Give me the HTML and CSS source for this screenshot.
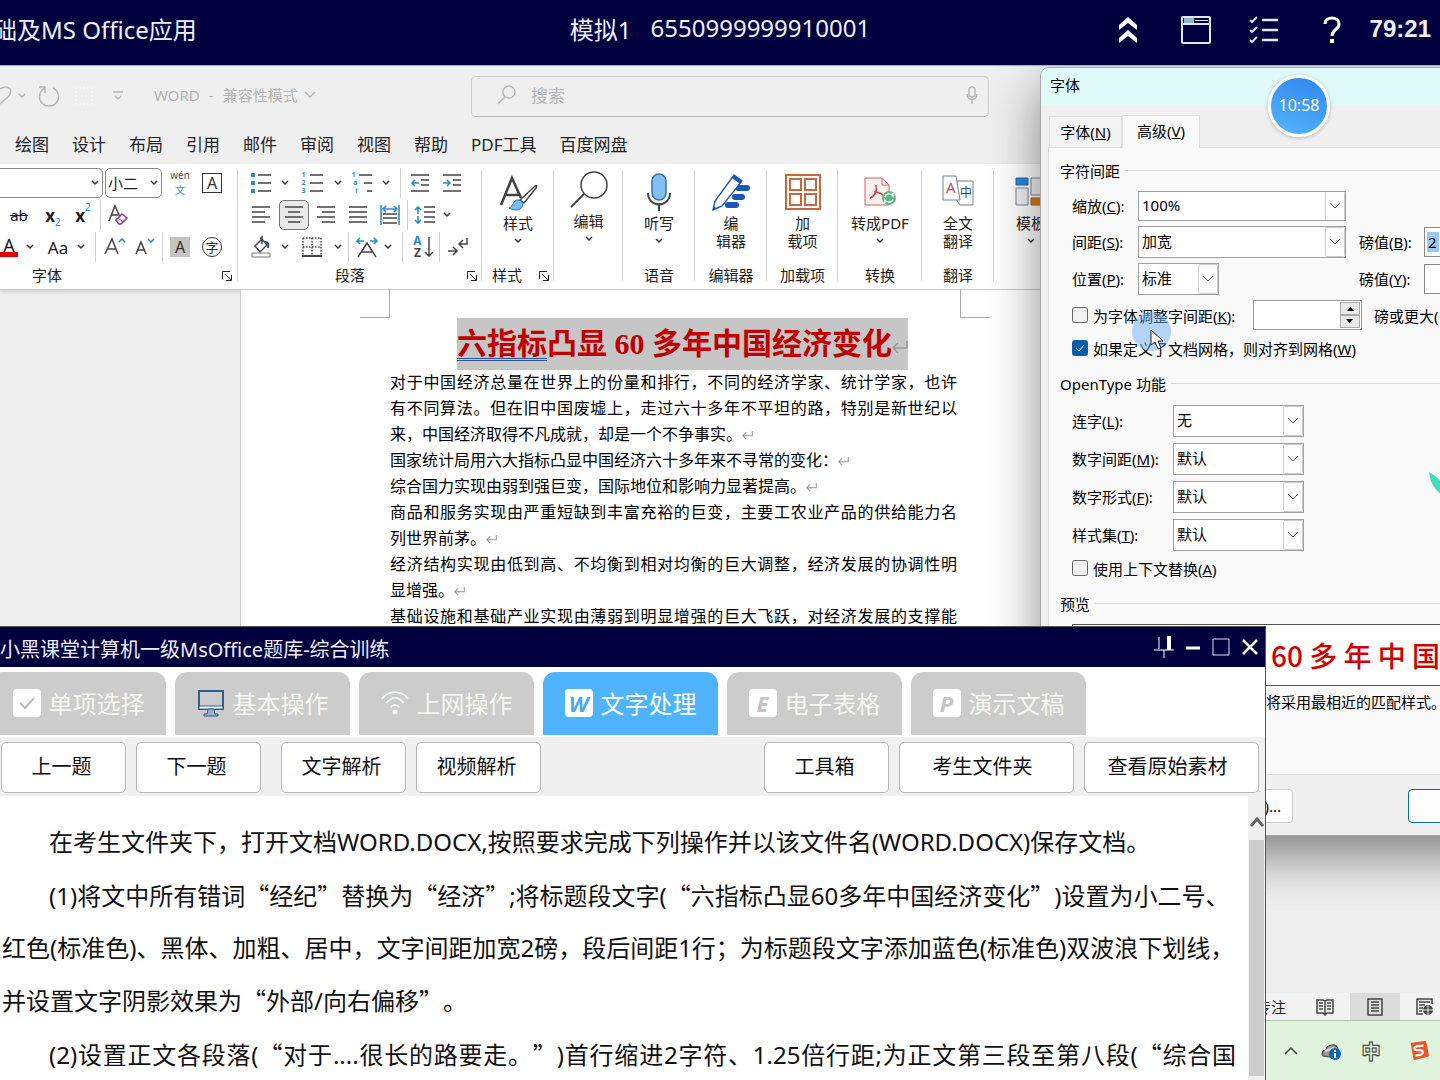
FILE: index.html
```html
<!DOCTYPE html>
<html lang="zh-CN">
<head>
<meta charset="utf-8">
<title>WORD</title>
<link rel="stylesheet" href="styles.css">
</head>
<body>
<div class="desktop">
  <header class="exam-bar">
    <div class="exam-title"><span>础及MS Office应用</span></div>
    <div class="exam-id"><span>模拟1</span><span>6550999999910001</span></div>
    <div class="exam-tools">
      <button aria-label="收起"><svg width="20" height="28" viewBox="0 0 20 28" fill="#fff"><path d="M10 1 19 9v5l-9-7-9 7V9zM10 14l9 8v5l-9-7-9 7v-5z"/></svg></button>
      <button aria-label="窗口"><svg width="30" height="28" viewBox="0 0 30 28" fill="none" stroke="#e4e8ff" stroke-width="2"><rect x="1" y="1" width="28" height="26" rx="1"/><path d="M1 8h28"/><path d="M3 4.500h10" stroke="#8fb8cc" stroke-width="5"/><path d="M14 4.500h13" stroke-width="1"/></svg></button>
      <button aria-label="列表"><svg width="30" height="28" viewBox="0 0 30 28" fill="none" stroke="#e8e8ff"><path d="M13 4h16M13 14h16M13 24h16" stroke-width="2.500"/><path d="m1 4 2 2 5-5M1 14l2 2 5-5M1 24l2 2 5-5" stroke-width="1.800"/></svg></button>
      <button aria-label="帮助"><svg width="18" height="28" viewBox="0 0 18 28" fill="none" stroke="#fff" stroke-width="3"><path d="M2 8c0-8 14-8 14 0 0 6-7 5-7 12"/><path d="M9 23v4" stroke-width="4"/></svg></button>
      <time>79:21</time>
    </div>
  </header>

  <main class="word">
    <div class="word-title">
      <div class="quick">
        <button class="q-undo" aria-label="撤消"><svg width="14" height="22" viewBox="0 0 14 22"><path d="M0 4c6-4 13-1 10 5-1 3-6 6-10 10"/></svg></button>
        <button class="q-chev" aria-label="撤消选项"><svg width="8" height="6" viewBox="0 0 8 6"><path d="m1 1 3 3 3-3"/></svg></button>
        <button class="q-redo" aria-label="重复"><svg width="22" height="22" viewBox="0 0 22 22"><path d="M1 2h6v6M7 3A9.500 9.500 0 1 0 15 3"/></svg></button>
        <span class="q-dots"></span>
        <button class="q-more" aria-label="自定义"><svg width="10" height="10" viewBox="0 0 10 10"><path d="M0 1h10M2 5l3 3 3-3"/></svg></button>
      </div>
      <div class="doc-name"><span>WORD</span><span>-</span><span>兼容性模式</span><svg width="12" height="8" viewBox="0 0 12 8"><path d="m1 1 5 5 5-5"/></svg></div>
      <label class="search">
        <svg width="20" height="20" viewBox="0 0 20 20"><circle cx="12" cy="7" r="6"/><path d="m8 12-7 7"/></svg>
        <input type="text" placeholder="搜索" aria-label="搜索">
        <svg width="12" height="18" viewBox="0 0 12 18"><rect x="3" y="1" width="6" height="10" rx="3"/><path d="M1 8c0 7 10 7 10 0M6 14v4"/></svg>
      </label>
    </div>
    <nav class="menu">
      <a href="#">绘图</a><a href="#">设计</a><a href="#">布局</a><a href="#">引用</a><a href="#">邮件</a><a href="#">审阅</a><a href="#">视图</a><a href="#">帮助</a><a href="#">PDF工具</a><a href="#">百度网盘</a>
    </nav>

    <div class="ribbon">
      <section class="group g-font">
        <div class="row r-a">
          <select class="combo name" aria-label="字体"><option></option></select>
          <select class="combo size" aria-label="字号"><option>小二</option></select>
          <button class="pinyin" aria-label="拼音指南"><span>wén</span><span>文</span></button>
          <button><span class="boxed">A</span></button>
        </div>
        <div class="row r-b">
          <button><s>ab</s></button>
          <button class="script"><b>x</b><sub>2</sub></button>
          <button class="script"><b>x</b><sup>2</sup></button>
          <i class="sep"></i>
          <button aria-label="清除格式"><svg width="22" height="22" viewBox="0 0 22 22"><path class="k" d="M2 17 8 2l5 11M4 11h7"/><path d="m9 16 6-6 5 4-6 6h-2z" fill="#fff" stroke="#8e3a9d" stroke-width="1.600"/><path d="m11 14 5 4" stroke="#8e3a9d"/></svg></button>
        </div>
        <div class="row r-c">
          <button class="font-color">A</button>
          <button class="chev" aria-label="颜色选项"></button>
          <button class="aa">Aa</button>
          <button class="chev" aria-label="大小写选项"></button>
          <i class="sep"></i>
          <button aria-label="增大字号"><svg width="22" height="22" viewBox="0 0 22 22"><path class="k" d="M1 18 8 3l6 15M4 13h8"/><path class="b" d="m15 6 3-3 3 3"/></svg></button>
          <button aria-label="减小字号"><svg width="22" height="22" viewBox="0 0 22 22"><path class="k" d="m3 18 5-12 5 12M5 14h6"/><path class="b" d="m15 3 3 3 3-3"/></svg></button>
          <i class="sep"></i>
          <button><span class="shaded">A</span></button>
          <button><span class="ringed">字</span></button>
        </div>
        <div class="caption"><span>字体</span><button class="launch" aria-label="字体设置"></button></div>
      </section>

      <section class="group g-para">
        <div class="row p-a">
          <button aria-label="项目符号"><svg width="20" height="20" viewBox="0 0 20 20"><path class="k" d="M7 2h13M7 10h13M7 18h13"/><path d="M0 0h4v4H0zM0 8h4v4H0zM0 16h4v4H0z" fill="#2b8bc9"/></svg></button>
          <button class="chev" aria-label="项目符号选项"></button>
          <button class="num" aria-label="编号"><span>1<br>2<br>3</span><svg width="14" height="20" viewBox="0 0 14 20"><path class="k" d="M1 2h13M1 10h13M1 18h13"/></svg></button>
          <button class="chev" aria-label="编号选项"></button>
          <button class="num multi" aria-label="多级列表"><span>1<br>&nbsp;a<br>&nbsp;&nbsp;i</span><svg width="14" height="20" viewBox="0 0 14 20"><path class="k" d="M0 2h13M5 10h8M8 18h5"/></svg></button>
          <button class="chev" aria-label="多级列表选项"></button>
          <i class="sep"></i>
          <button aria-label="减少缩进"><svg width="18" height="18" viewBox="0 0 18 18"><path class="k" d="M0 1h18M10 6h8M10 11h8M0 17h18"/><path class="b" d="M8 9H1m3-3L1 9l3 3"/></svg></button>
          <button aria-label="增加缩进"><svg width="18" height="18" viewBox="0 0 18 18"><path class="k" d="M0 1h18M10 6h8M10 11h8M0 17h18"/><path class="b" d="M0 9h7M4 6l3 3-3 3"/></svg></button>
        </div>
        <div class="row p-b">
          <button aria-label="左对齐"><svg width="18" height="18" viewBox="0 0 18 18"><path class="k" d="M0 1h18M0 6h13M0 11h18M0 16h13"/></svg></button>
          <button class="on" aria-label="居中"><svg width="18" height="18" viewBox="0 0 18 18"><path class="k" d="M0 1h18M3 6h12M0 11h18M3 16h12"/></svg></button>
          <button aria-label="右对齐"><svg width="18" height="18" viewBox="0 0 18 18"><path class="k" d="M0 1h18M5 6h13M0 11h18M5 16h13"/></svg></button>
          <button aria-label="两端对齐"><svg width="18" height="18" viewBox="0 0 18 18"><path class="k" d="M0 1h18M0 6h18M0 11h18M0 16h18"/></svg></button>
          <button aria-label="分散对齐"><svg width="20" height="20" viewBox="0 0 20 20"><path class="k" d="M3 9h14M3 13h14M3 18h14"/><path class="b" d="M1 0v20M19 0v20M3 4h14M6 1 3 4l3 3M14 1l3 3-3 3"/></svg></button>
          <i class="sep"></i>
          <button aria-label="行距"><svg width="20" height="18" viewBox="0 0 20 18"><path class="k" d="M9 1h11M9 6h11M9 11h11M9 16h11"/><path class="b" d="M3 8V1M0 4l3-3 3 3M3 10v7M0 14l3 3 3-3"/></svg></button>
          <button class="chev" aria-label="行距选项"></button>
        </div>
        <div class="row p-c">
          <button aria-label="底纹"><svg width="20" height="22" viewBox="0 0 20 22"><path class="k" d="m4 10 7-7 5 6-7 7zM11 8V1l-2 2"/><path d="M14 6c3 0 4 2 3 6" fill="none" stroke="#1e4e79" stroke-width="2"/><path d="M1 17h18v4H1z" fill="#fff" stroke="#777"/></svg></button>
          <button class="chev" aria-label="底纹选项"></button>
          <button aria-label="边框"><svg width="20" height="20" viewBox="0 0 20 20"><path class="k" d="M1 1h18M1 10h18M1 1v18M10 1v18M19 1v18" stroke-dasharray="1.500 1.500"/><path d="M0 19h20" stroke="#444" stroke-width="2"/></svg></button>
          <button class="chev" aria-label="边框选项"></button>
          <i class="sep"></i>
          <button aria-label="中文版式"><svg width="20" height="22" viewBox="0 0 20 22"><path class="k" d="m1 21 9-14 9 14M5 16h10"/><path class="b" d="M7 5H0m3-3L0 5l3 3M13 5h7m-3-3 3 3-3 3"/></svg></button>
          <button class="chev" aria-label="中文版式选项"></button>
          <i class="sep"></i>
          <button class="az" aria-label="排序"><span>A<br>Z</span><svg width="8" height="20" viewBox="0 0 8 20"><path class="k" d="M4 0v19M0 15l4 4 4-4"/></svg></button>
          <i class="sep"></i>
          <button aria-label="显示编辑标记"><svg width="20" height="20" viewBox="0 0 20 20"><path class="k" d="M19 1v6h-7m3-4-4 4 4 4M0 14h9M5 10l4 4-4 4"/></svg></button>
        </div>
        <div class="caption"><span>段落</span><button class="launch" aria-label="段落设置"></button></div>
      </section>

      <section class="group g-style">
        <button class="big"><svg width="38" height="38" viewBox="0 0 38 38"><path d="M2 32 13 5l9 20M6 22h14" fill="none" stroke="#444" stroke-width="2.600"/><path d="M21 27 36 13c2-1 2 0 1 2L25 30z" fill="#fff" stroke="#444" stroke-width="1.500"/><path d="M10 35c4-1 4-8 9-8 7 1 6 9-1 10-4 0-6-1-8-2z" fill="#7cbdee" stroke="#2b6fa8"/></svg><span>样式</span><em class="chev"></em></button>
        <div class="caption"><span>样式</span><button class="launch" aria-label="样式设置"></button></div>
      </section>
      <section class="group g-edit">
        <button class="big"><svg width="38" height="38" viewBox="0 0 38 38"><circle class="k" cx="24" cy="14" r="13"/><path d="M14 23 1 36" stroke="#444" stroke-width="2"/></svg><span>编辑</span><em class="chev"></em></button>
      </section>
      <section class="group g-voice">
        <button class="big"><svg width="38" height="38" viewBox="0 0 38 38"><rect x="12" y="1" width="14" height="26" rx="7" fill="#83c0f0" stroke="#2b74b8" stroke-width="1.500"/><path d="M8 20c0 15 22 15 22 0M19 31v7" fill="none" stroke="#444" stroke-width="2"/></svg><span>听写</span><em class="chev"></em></button>
        <div class="caption"><span>语音</span></div>
      </section>
      <section class="group g-editor">
        <button class="big"><svg width="38" height="38" viewBox="0 0 38 38"><path d="M26 15h9M23 24h7M16 32h8" stroke="#1b57b8" stroke-width="6" stroke-linecap="round"/><path d="M1 37 3 28 22 2l8 6L10 33z" fill="#fff" stroke="#1b57b8" stroke-width="1.400"/><path d="m22 2 8 6-2 3-8-6zM1 37l1-4 2 2z" fill="#1b57b8"/></svg><span>编<br>辑器</span></button>
        <div class="caption"><span>编辑器</span></div>
      </section>
      <section class="group g-addin">
        <button class="big"><svg width="38" height="38" viewBox="0 0 38 38" fill="none" stroke="#c9683c" stroke-width="2"><path d="M2 2h34v34H2z"/><path d="M6 6h11v11H6zM21 6h11v11H21zM6 21h11v11H6zM21 21h11v11H21z"/></svg><span>加<br>载项</span></button>
        <div class="caption"><span>加载项</span></div>
      </section>
      <section class="group g-pdf">
        <button class="big"><svg width="38" height="38" viewBox="0 0 38 38"><path d="M4 5h17l7 7v20H4zM21 5v7h7" fill="#fdeeee" stroke="#cc6666"/><path d="M9 25c5-2 7-7 6-13M13 19c4 0 7 1 10 4" fill="none" stroke="#c94a4a" stroke-width="1.500"/><circle cx="28" cy="25" r="7" fill="#5cb885"/><path d="M24 24c1-4 6-4 8-1v-3M32 26c-1 4-6 4-8 1v3" fill="none" stroke="#fff" stroke-width="1.300"/></svg><span>转成PDF</span><em class="chev"></em></button>
        <div class="caption"><span>转换</span></div>
      </section>
      <section class="group g-trans">
        <button class="big"><svg width="38" height="38" viewBox="0 0 38 38"><path d="M18 8h16v24H21l-3-4z" fill="#fff" stroke="#76808a"/><path d="M4 3h13l4 24H4z" fill="#fff" stroke="#76808a"/><text x="7" y="20" font-size="15" fill="#c0504d">A</text><text x="21" y="24" font-size="12" fill="#24466b">中</text></svg><span>全文<br>翻译</span></button>
        <div class="caption"><span>翻译</span></div>
      </section>
      <section class="group g-tpl">
        <button class="big"><svg width="32" height="38" viewBox="0 0 32 38"><path d="M1 5h12v7H1z" fill="#2b88d8" stroke="#1d6fb5"/><path d="M1 15h12v17H1zM16 5h12v17H16z" fill="#f0f2f5" stroke="#7f8894"/><path d="M16 25h12v7H16z" fill="#e07b1a" stroke="#b8620d"/></svg><span>模板</span><em class="chev"></em></button>
      </section>
    </div>

    <div class="canvas">
      <article class="page">
        <i class="crop crop-l"></i><i class="crop crop-r"></i>
        <h1><span><u>六指标</u>凸显 60 多年中国经济变化<svg class="ret" width="16" height="14" viewBox="0 0 16 14"><path d="M15 1v7H1m5-5L1 8l5 5"/></svg></span></h1>
        <p><span class="full">对于中国经济总量在世界上的份量和排行，不同的经济学家、统计学家，也许</span>
        <span class="full">有不同算法。但在旧中国废墟上，走过六十多年不平坦的路，特别是新世纪以</span>
        <span class="end">来，中国经济取得不凡成就，却是一个不争事实。<svg class="ret" width="11" height="10" viewBox="0 0 16 14"><path d="M15 1v7H1m5-5L1 8l5 5"/></svg></span></p>
        <p><span class="end">国家统计局用六大指标凸显中国经济六十多年来不寻常的变化：<svg class="ret" width="11" height="10" viewBox="0 0 16 14"><path d="M15 1v7H1m5-5L1 8l5 5"/></svg></span></p>
        <p><span class="end">综合国力实现由弱到强巨变，国际地位和影响力显著提高。<svg class="ret" width="11" height="10" viewBox="0 0 16 14"><path d="M15 1v7H1m5-5L1 8l5 5"/></svg></span></p>
        <p><span class="full">商品和服务实现由严重短缺到丰富充裕的巨变，主要工农业产品的供给能力名</span>
        <span class="end">列世界前茅。<svg class="ret" width="11" height="10" viewBox="0 0 16 14"><path d="M15 1v7H1m5-5L1 8l5 5"/></svg></span></p>
        <p><span class="full">经济结构实现由低到高、不均衡到相对均衡的巨大调整，经济发展的协调性明</span>
        <span class="end">显增强。<svg class="ret" width="11" height="10" viewBox="0 0 16 14"><path d="M15 1v7H1m5-5L1 8l5 5"/></svg></span></p>
        <p><span class="full">基础设施和基础产业实现由薄弱到明显增强的巨大飞跃，对经济发展的支撑能</span></p>
      </article>
    </div>

    <div class="status">
      <span>专注</span>
      <button aria-label="阅读视图"><svg width="18" height="18" viewBox="0 0 18 18"><path class="k" d="M9 3v14M1 2h6l2 1 2-1h6v13h-6l-2 2-2-2H1zM3 5h4M3 8h4M3 11h4M11 5h4M11 8h4M11 11h4"/></svg></button>
      <button class="on" aria-label="页面视图"><svg width="16" height="18" viewBox="0 0 16 18"><path class="k" d="M1 1h14v16H1zM4 4h8M4 7h8M4 10h8M4 13h8"/></svg></button>
      <button class="web" aria-label="Web 版式"><svg width="18" height="18" viewBox="0 0 18 18"><path class="k" d="M16 6V1H1v15h6M3 4h11M3 7h6M3 10h4M3 13h3"/><circle cx="12" cy="12" r="5" fill="#444"/><path d="M7 12h10M12 7v10" stroke="#eee"/></svg></button>
    </div>
  </main>

  <footer class="taskbar">
    <button aria-label="显示隐藏的图标"><svg width="14" height="8" viewBox="0 0 14 8"><path class="k" d="m1 7 6-6 6 6"/></svg></button>
    <button aria-label="云盘"><svg width="20" height="18" viewBox="0 0 20 18"><path d="M2 14c-2-3 0-6 3-6 1-6 10-7 12-1l1 4-9 4z" fill="#999" stroke="#444" stroke-width="1.200"/><path d="m4 9 9-3" stroke="#ddd" stroke-width="2"/><circle cx="14" cy="12" r="6" fill="#0b66c3"/><path d="M14 11v5M14 8v2" stroke="#fff" stroke-width="2"/></svg></button>
    <button class="ime">中</button>
    <button class="sogou" aria-label="输入法"><svg width="20" height="20" viewBox="0 0 22 22"><path d="M3 3 18 1l3 15-15 4z" fill="#e8552d" stroke="#e8552d" stroke-width="2" stroke-linejoin="round"/><path d="M16 5 8 6c-3 1-2 4 0 4h5c3 1 3 4 0 5l-6 1" fill="none" stroke="#fff" stroke-width="2.500"/></svg></button>
  </footer>

  <section class="dialog">
    <h2>字体</h2>
    <div class="dlg-tabs"><button>字体(<u>N</u>)</button><button class="on">高级(<u>V</u>)</button></div>
    <div class="dlg-panel">
      <h3>字符间距</h3>
      <div class="field short"><label for="zoom">缩放(<u>C</u>):</label><select id="zoom"><option>100%</option></select></div>
      <div class="field short"><label for="space">间距(<u>S</u>):</label><select id="space"><option>加宽</option></select><label class="pt" for="ptb">磅值(<u>B</u>):</label><span class="val"><mark>2</mark><input id="ptb" type="text"></span></div>
      <div class="field"><label for="pos">位置(<u>P</u>):</label><select id="pos" class="narrow"><option>标准</option></select><label class="pt after" for="pty">磅值(<u>Y</u>):</label><span class="val"><input id="pty" type="text"></span></div>
      <div class="check kern"><input type="checkbox" id="kern"><label for="kern">为字体调整字间距(<u>K</u>):</label><span class="spin"><input type="text" aria-label="磅"><button aria-label="增加"></button><button class="down" aria-label="减少"></button></span><span>磅或更大(</span></div>
      <div class="check"><input type="checkbox" id="snap" checked><label for="snap">如果定义了文档网格，则对齐到网格(<u>W</u>)</label></div>
      <h3 class="mid">OpenType 功能</h3>
      <div class="field ot"><label for="lig">连字(<u>L</u>):</label><select id="lig"><option>无</option></select></div>
      <div class="field ot"><label for="ns">数字间距(<u>M</u>):</label><select id="ns"><option>默认</option></select></div>
      <div class="field ot"><label for="nf">数字形式(<u>F</u>):</label><select id="nf"><option>默认</option></select></div>
      <div class="field ot"><label for="ss">样式集(<u>T</u>):</label><select id="ss"><option>默认</option></select></div>
      <div class="check ctx"><input type="checkbox" id="ctx"><label for="ctx">使用上下文替换(<u>A</u>)</label></div>
      <h3 class="last">预览</h3>
      <div class="preview"><span>60多年中国</span></div>
      <p>将采用最相近的匹配样式。</p>
    </div>
    <div class="dlg-foot"><button>)...</button><button class="ok" aria-label="确定"></button></div>
  </section>

  <div class="clock">10:58</div>
  <svg class="leaf" width="12" height="24" viewBox="0 0 12 24"><path d="M0 0c5 3 9 6 12 10v12C5 17 1 10 0 0z" fill="#45dcb8"/></svg>
  <div class="pointer"><svg width="14" height="21" viewBox="0 0 14 21"><path d="M1 1v15l4-3 3 7 3-1-3-7h5z" fill="#fff" stroke="#222"/></svg></div>

  <section class="quiz">
    <div class="quiz-bar">
      <h2>小黑课堂计算机一级MsOffice题库-综合训练</h2>
      <button aria-label="置顶"><svg width="20" height="22" viewBox="0 0 20 22" stroke="#fff" fill="none"><path d="M5 1v12M0 14h20M10 14v8"/><path d="M15 0v14" stroke-width="4"/></svg></button>
      <button aria-label="最小化"><svg width="14" height="22" viewBox="0 0 14 22" stroke="#fff"><path d="M0 12h14" stroke-width="3"/></svg></button>
      <button aria-label="最大化"><svg width="18" height="18" viewBox="0 0 18 18" stroke="#dde" fill="none"><path d="M1 1h16v16H1z"/></svg></button>
      <button aria-label="关闭"><svg width="16" height="16" viewBox="0 0 16 16" stroke="#fff" stroke-width="2.500"><path d="m1 1 14 14M15 1 1 15"/></svg></button>
    </div>
    <nav class="quiz-tabs">
      <a href="#"><i class="tile"><svg width="20" height="20" viewBox="0 0 20 20"><path d="m3 10 5 5L17 5" fill="none" stroke="#bbb" stroke-width="2"/></svg></i>单项选择</a>
      <a href="#"><svg width="28" height="28" viewBox="0 0 28 28"><path d="M2 2h24v18H2z" fill="#c9cdd0" stroke="#2f5f86" stroke-width="2"/><path d="M2 17h24v3H2z" fill="#fff" stroke="#2f5f86"/><path d="M11 20h6l1 5h3v2H7v-2h3z" fill="#8fb4d8" stroke="#2f5f86"/></svg>基本操作</a>
      <a href="#"><svg width="28" height="28" viewBox="0 0 32 28" fill="none" stroke="#f2f6f6" stroke-width="2"><path d="M1 9c8-10 22-10 30 0M6 14c6-8 14-8 20 0M11 19c3-4 7-4 10 0"/><circle cx="16" cy="24" r="2" fill="#fff"/></svg>上网操作</a>
      <a href="#" class="on"><i class="tile">W</i>文字处理</a>
      <a href="#"><i class="tile">E</i>电子表格</a>
      <a href="#"><i class="tile">P</i>演示文稿</a>
    </nav>
    <div class="quiz-tools">
      <button>上一题</button><button class="gap">下一题</button><button>文字解析</button><button>视频解析</button>
      <button class="push">工具箱</button><button class="wide">考生文件夹</button><button class="wide">查看原始素材</button>
    </div>
    <div class="quiz-body">
      <div class="quiz-text">
        <p>在考生文件夹下，打开文档WORD.DOCX,按照要求完成下列操作并以该文件名(WORD.DOCX)保存文档。</p>
        <p>(1)将文中所有错词<q>“</q>经纪<q>”</q>替换为<q>“</q>经济<q>”</q>;将标题段文字(<q>“</q>六指标凸显60多年中国经济变化<q>”</q>)设置为小二号、<br>红色(标准色)、黑体、加粗、居中，文字间距加宽2磅，段后间距1行；为标题段文字添加蓝色(标准色)双波浪下划线，<br>并设置文字阴影效果为<q>“</q>外部/向右偏移<q>”</q>。</p>
        <p class="spread">(2)设置正文各段落(<q>“</q>对于....很长的路要走。<q>”</q>)首行缩进2字符、1.25倍行距;为正文第三段至第八段(<q>“</q>综合国</p>
      </div>
      <div class="scroll"><svg width="16" height="12" viewBox="0 0 16 12"><path d="m2 10 6-7 6 7" fill="none" stroke="#666" stroke-width="3"/></svg><i></i></div>
    </div>
  </section>
</div>
</body>
</html>
```

FILE: styles.css
```css
* { box-sizing: border-box; }
body {
  margin: 0;
  font-family: "Noto Sans", "Noto Sans CJK SC", sans-serif;
  font-size: 15px;
  color: #222;
  text-spacing-trim: space-all;
}
button, input, select { font: inherit; color: inherit; }
button { padding: 0; border: 0; background: none; }
a { color: inherit; text-decoration: none; }
svg { flex: none; display: block; overflow: visible; }
h1, h2, h3, p { margin: 0; font-weight: 400; }
.k { fill: none; stroke: #444; stroke-width: 1.5; }
.b { fill: none; stroke: #2b8bc9; stroke-width: 1.6; }

.desktop {
  position: relative;
  display: flex;
  flex-direction: column;
  height: 100vh;
  overflow: hidden;
  background: #efefef;
}

/* exam bar */
.exam-bar {
  position: relative;
  z-index: 2;
  flex: none;
  display: grid;
  grid-template-columns: 1fr auto 1fr;
  align-items: center;
  height: 66px;
  padding-bottom: 8px;
  background: #00003f;
  border-bottom: 1px solid #8fb0d8;
  color: #f0f0ff;
  font-size: 24px;
}
.exam-title { display: flex; white-space: nowrap; margin-left: -7px; }
.exam-id { display: flex; gap: 19px; }
.exam-tools { display: flex; justify-content: flex-end; align-items: center; padding-right: 9px; }
.exam-tools button { display: grid; place-items: center; width: 68px; height: 40px; padding-top: 2px; }
.exam-tools time { margin-left: 4px; font-family: "Liberation Sans", sans-serif; font-weight: 700; }

/* word window */
.word { flex: 1; display: flex; flex-direction: column; min-height: 0; }
.word-title {
  flex: none;
  display: flex;
  align-items: center;
  height: 60px;
  color: #b4b4b4;
}
.word-title svg { fill: none; stroke: #b8b8b8; stroke-width: 1.5; }
.quick { display: flex; align-items: center; width: 154px; }
.q-undo { width: 14px; }
.q-chev { margin-left: 4px; width: 8px; }
.q-redo { margin-left: 12px; width: 22px; }
.q-dots { width: 18px; height: 18px; margin-left: 15px; border: 2px dotted #f5f5f5; }
.q-more { margin-left: 20px; }
.doc-name { display: flex; align-items: center; gap: 9px; width: 317px; padding-bottom: 3px; }
.doc-name svg { margin-left: -3px; }
.search {
  display: flex;
  align-items: center;
  gap: 14px;
  width: 518px;
  height: 41px;
  padding: 0 10px 2px 25px;
  border: 1px solid #cfcfcf;
  border-bottom-color: #b8b8b8;
  border-radius: 5px;
  font-size: 17px;
}
.search input { flex: 1; min-width: 0; border: 0; padding: 0; background: none; }
.search input::placeholder { color: #b4b4b4; }
.menu {
  flex: none;
  display: flex;
  align-items: center;
  gap: 23px;
  height: 38px;
  padding: 0 0 3px 15px;
  font-size: 17px;
}

/* ribbon */
.ribbon {
  position: relative;
  flex: none;
  display: flex;
  height: 126px;
  background: #fff;
  border-bottom: 1px solid #c8c8c8;
  box-shadow: 0 2px 4px rgba(0, 0, 0, .12);
}
.group {
  position: relative;
  flex: none;
  display: flex;
  flex-direction: column;
  padding-top: 3px;
}
.group::after {
  content: "";
  position: absolute;
  right: 0;
  top: 6px;
  bottom: 8px;
  width: 1px;
  background: #cfcfcf;
}
.g-font { width: 238px; }
.g-para { width: 244px; padding-left: 6px; }
.g-style { width: 72px; }
.g-edit { width: 69px; }
.g-voice { width: 72px; }
.g-editor { width: 72px; }
.g-addin { width: 71px; }
.g-pdf { width: 84px; }
.g-trans { width: 72px; }
.g-tpl { width: 74px; }
.row { display: grid; align-items: center; height: 32px; }
.row > button { display: flex; align-items: center; justify-content: center; height: 30px; }
.r-a { grid-template-columns: 104px 60px 32px 32px; }
.r-b { grid-template-columns: 38px 30px 30px 4px 32px; }
.r-c { grid-template-columns: 18px 24px 32px 14px 14px 26px 32px 4px 32px 32px; }
.p-a { grid-template-columns: 34px 14px 40px 12px 36px 12px 16px 24px 40px; }
.p-b { grid-template-columns: 34px 32px 32px 32px 32px 2px 34px 10px; }
.p-c { grid-template-columns: 34px 14px 40px 12px 8px 30px 12px 16px 26px 6px 32px; }
.sep { justify-self: center; width: 1px; height: 30px; background: #d0d0d0; }
.chev {
  background: url("data:image/svg+xml,%3Csvg xmlns='http://www.w3.org/2000/svg' width='8' height='6'%3E%3Cpath d='M1 1l3 3 3-3' fill='none' stroke='%23333' stroke-width='1.500'/%3E%3C/svg%3E") center no-repeat;
}
.combo {
  appearance: none;
  height: 30px;
  padding: 0 2px;
  border: 1px solid #888;
  border-radius: 5px;
  background: #fff url("data:image/svg+xml,%3Csvg xmlns='http://www.w3.org/2000/svg' width='8' height='6'%3E%3Cpath d='M1 1l3 3 3-3' fill='none' stroke='%23333' stroke-width='1.500'/%3E%3C/svg%3E") right 3px center no-repeat;
}
.combo.name { width: 103px; border-left: 0; border-radius: 0 5px 5px 0; }
.combo.size { width: 57px; margin-left: 1px; }
.row > .pinyin { flex-direction: column; font-size: 10px; line-height: 15px; color: #555; }
.pinyin span + span { color: #2b8bc9; }
.boxed, .shaded, .ringed {
  display: grid;
  place-items: center;
  width: 20px;
  height: 20px;
  line-height: 1;
  font-size: 16px;
  color: #333;
}
.boxed { border: 1px solid #333; }
.shaded { background: #c6c4c2; }
.ringed { border: 1px solid #333; border-radius: 50%; font-size: 13px; }
.script { font-size: 17px; }
.script sub, .script sup { font-size: 10px; color: #2b8bc9; line-height: 1; }
.script sub { align-self: flex-end; padding-bottom: 3px; }
.script sup { align-self: flex-start; padding-top: 2px; }
.row > .font-color { height: 20px; border-bottom: 5px solid #e00000; font-size: 18px; line-height: 14px; }
.aa { font-size: 17px; }
.num span { width: 7px; font-size: 7px; font-weight: 700; line-height: 8px; color: #2b8bc9; text-align: left; white-space: nowrap; }
.row > .on { border: 1px solid #777; border-radius: 5px; background: #e8e8e8; width: 30px; justify-self: center; }
.az { gap: 3px; }
.az span { font-size: 12px; font-weight: 700; line-height: 12px; color: #444; }
.az span::first-line { color: #2b8bc9; }
.caption {
  display: flex;
  align-items: center;
  justify-content: center;
  height: 26px;
  margin-top: auto;
}
.caption span { padding-bottom: 3px; }
.g-font .caption { justify-content: space-between; padding: 0 6px 0 32px; }
.g-para .caption { justify-content: flex-end; gap: 102px; padding-right: 5px; }
.g-style .caption { justify-content: space-between; padding: 0 5px 0 10px; }
.launch {
  width: 10px;
  height: 10px;
  background: url("data:image/svg+xml,%3Csvg xmlns='http://www.w3.org/2000/svg' width='10' height='10'%3E%3Cpath d='M.5 8V.5H8M3 3l6 6M9.500 4v5.500H4' fill='none' stroke='%23222'/%3E%3C/svg%3E") no-repeat;
}
.big { display: flex; flex-direction: column; align-items: center; padding-top: 6px; line-height: 18px; }
.big span { margin-top: 3px; }
.big .chev { width: 10px; height: 18px; }
.g-edit .big { padding-top: 4px; }

/* document */
.canvas { flex: 1; min-height: 0; overflow: hidden; background: #eee; padding-left: 240px; }
.page {
  position: relative;
  width: 870px;
  height: 100%;
  padding: 28px 153px 0 149px;
  background: #fff;
  border-left: 1px solid #ccc;
  color: #000;
}
.crop { position: absolute; top: 0; width: 30px; height: 28px; border-bottom: 1px solid #aaa; }
.crop-l { left: 119px; border-right: 1px solid #aaa; }
.crop-r { right: 120px; border-left: 1px solid #aaa; }
.page h1 { display: flex; justify-content: center; height: 50px; white-space: nowrap; }
.page h1 span {
  height: 52px;
  margin-left: 18px;
  background: #c6c6c6;
  color: #c00000;
  font-family: "Liberation Serif", "Noto Sans CJK SC", sans-serif;
  font-size: 30px;
  font-weight: 700;
  line-height: 52px;
}
.page h1 u { text-decoration: underline double #2f5597 1px; text-underline-offset: 4px; }
.ret { display: inline-block; fill: none; stroke: #999; stroke-width: 1.5; }
.page p { font-family: "Noto Sans CJK SC", sans-serif; font-size: 16px; line-height: 26px; }
.page p span { display: block; white-space: nowrap; }
.page .full { text-align: justify; text-align-last: justify; white-space: normal; }

.status {
  flex: none;
  display: flex;
  justify-content: flex-end;
  align-items: center;
  height: 27px;
  background: #f2f2f2;
}
.status span { margin-right: 14px; }
.status button { display: grid; place-items: center; width: 50px; height: 27px; }
.status .on { background: #dcdcdc; }
.status .web { width: 40px; justify-items: end; padding-right: 6px; }

.taskbar {
  flex: none;
  display: flex;
  justify-content: flex-end;
  align-items: center;
  height: 60px;
  background: #e0f3dc;
  border-top: 1px solid #b8c4b8;
}
.taskbar button { display: grid; place-items: center; width: 40px; height: 40px; }
.taskbar .ime { font-size: 19px; font-weight: 900; font-family: "Noto Sans CJK SC", sans-serif; color: #e0f3dc; -webkit-text-stroke: 1px #333; }
.taskbar .sogou { width: 49px; padding-left: 6px; }

/* font dialog */
.dialog {
  position: absolute;
  left: 1040px;
  top: 67px;
  width: 560px;
  background: #f0f0f0;
  border: 1px solid #a8a8a8;
  border-radius: 9px 9px 0 0;
  box-shadow: 0 20px 50px rgba(0, 0, 0, .45);
  color: #000;
  white-space: nowrap;
}
.dialog h2 {
  height: 37px;
  padding-left: 9px;
  border-radius: 8px 8px 0 0;
  background: #e0fafa;
  font-size: 15px;
  line-height: 34px;
}
.dlg-tabs { display: flex; align-items: flex-end; height: 42px; padding: 0 8px; }
.dlg-tabs button { width: 73px; height: 31px; padding-bottom: 2px; border: 1px solid #e0e0e0; border-bottom: 0; background: #f3f3f3; }
.dlg-tabs .on { width: 78px; height: 33px; padding-bottom: 4px; background: #f9f9f9; position: relative; z-index: 1; margin-bottom: -1px; }
.dlg-panel {
  height: 628px;
  margin: 0 7px;
  padding: 4px 0 0 23px;
  background: #f9f9f9;
  border: 1px solid #dcdcdc;
}
.dialog h3 {
  display: flex;
  align-items: center;
  gap: 5px;
  height: 36px;
  margin-left: -12px;
  font-size: 15px;
}
.dialog h3::after { content: ""; flex: 1; height: 1px; background: #dcdcdc; }
.dialog h3.mid { height: 38px; }
.dialog h3.last { height: 42px; }
.field { display: flex; align-items: center; height: 38px; }
.field.short { height: 36px; }
.field label { flex: none; width: 66px; padding-bottom: 2px; }
.field.ot label { width: 101px; }
.field .pt { width: 65px; margin-left: 13px; }
.field .after { margin-left: 140px; }
.dialog select {
  appearance: none;
  width: 208px;
  height: 32px;
  padding: 0 0 2px 3px;
  border: 1px solid #a0a0a0;
  border-radius: 0;
  background: #fff url("data:image/svg+xml,%3Csvg xmlns='http://www.w3.org/2000/svg' width='20' height='30'%3E%3Crect x='.5' y='.5' width='19' height='29' rx='1' fill='%23fdfdfd' stroke='%23ccc'/%3E%3Cpath d='M5 12l5 5 5-5' fill='none' stroke='%23555'/%3E%3C/svg%3E") right center no-repeat;
}
.dialog #zoom { height: 30px; }
.dialog .narrow { width: 81px; }
.dialog .ot select { width: 131px; }
.val { display: flex; align-items: center; width: 100px; height: 30px; padding-left: 2px; border: 1px solid #888; background: #fff; }
.val mark { background: #9cc8ef; padding: 0 2px 0 1px; }
.val input { width: 70px; border: 0; padding: 0; background: none; }
.check { display: flex; align-items: center; height: 32px; }
.check.ctx { height: 28px; }
.check input[type="checkbox"] {
  appearance: none;
  width: 16px;
  height: 16px;
  margin: 0 5px 0 0;
  border: 1px solid #666;
  border-radius: 3px;
  background: #f4f4f4;
}
.check input:checked {
  border-color: #0a5cad;
  background: #0a5cad url("data:image/svg+xml,%3Csvg xmlns='http://www.w3.org/2000/svg' width='10' height='8'%3E%3Cpath d='M1 4l3 3 5-6' fill='none' stroke='%23fff'/%3E%3C/svg%3E") center no-repeat;
}
.check.kern { height: 34px; }
.kern label { width: 160px; }
.spin {
  display: grid;
  grid-template: 13px 13px / 1fr 20px;
  width: 109px;
  height: 30px;
  padding: 1px;
  margin-right: 12px;
  border: 1px solid #999;
  background: #fff;
}
.spin input { grid-row: span 2; width: 100%; min-width: 0; border: 0; padding: 0; }
.spin button {
  border: 1px solid #aaa;
  background: #e8e8e8 url("data:image/svg+xml,%3Csvg xmlns='http://www.w3.org/2000/svg' width='7' height='4'%3E%3Cpath d='M0 4l3.500-4L7 4z'/%3E%3C/svg%3E") center no-repeat;
}
.spin .down { transform: rotate(180deg); }
.preview {
  display: flex;
  align-items: center;
  height: 62px;
  padding-left: 198px;
  border: 1px solid #555;
  background: #fff;
  color: #d00000;
  font-family: "Noto Sans CJK SC", sans-serif;
  font-size: 28px;
  font-weight: 500;
}
.preview span { width: 169px; text-align-last: justify; }
.dlg-panel p { padding-left: 194px; line-height: 32px; }
.dlg-foot { display: flex; gap: 115px; height: 60px; padding: 14px 0 0 147px; }
.dlg-foot button { width: 105px; height: 34px; padding-right: 11px; text-align: right; border: 1px solid #ccc; border-radius: 4px; background: #fdfdfd; }
.dlg-foot .ok { border-color: #0a6a94; }

.clock {
  position: absolute;
  left: 1268px;
  top: 75px;
  width: 62px;
  height: 62px;
  border: 3px solid #fff;
  border-radius: 50%;
  background: linear-gradient(200deg, #2f86f0, #55b4fa);
  box-shadow: 0 1px 4px rgba(0, 0, 0, .25);
  color: #fff;
  font-size: 16px;
  line-height: 55px;
  text-align: center;
}
.leaf { position: absolute; left: 1429px; top: 472px; }
.pointer {
  position: absolute;
  left: 1132px;
  top: 312px;
  width: 39px;
  height: 39px;
  padding: 17px 0 0 18px;
  border-radius: 50%;
  background: rgba(110, 175, 245, .5);
}

/* quiz window */
.quiz {
  position: absolute;
  left: 0;
  top: 626px;
  bottom: 0;
  width: 1266px;
  display: flex;
  flex-direction: column;
  background: #fff;
  border: solid #555;
  border-width: 1px 1px 0 0;
  color: #111;
}
.quiz-bar { flex: none; display: flex; align-items: center; height: 40px; padding-right: 7px; gap: 12px; background: #00003f; color: #eef; }
.quiz-bar h2 { margin-right: auto; font-size: 20px; padding-top: 2px; }
.quiz-tabs { flex: none; display: flex; gap: 9px; height: 70px; margin-left: -9px; padding-top: 5px; }
.quiz-tabs a {
  display: flex;
  align-items: center;
  justify-content: center;
  gap: 8px;
  width: 175px;
  height: 63px;
  padding-bottom: 2px;
  border-radius: 12px 12px 0 0;
  background: #ccc;
  color: #f6f6f0;
  font-size: 24px;
}
.quiz-tabs .on { background: #4fb3ff; color: #fff; }
.tile { display: grid; place-items: center; width: 28px; height: 28px; border-radius: 4px; background: #fff; color: #c4c4c4; font: italic 700 22px/28px "Noto Sans", sans-serif; }
.on .tile { color: #4fa8f0; }
.quiz-tools { flex: none; display: flex; gap: 10px; height: 59px; padding: 5px 6px 0 1px; background: #f0f0f0; }
.quiz-tools button { width: 125px; height: 51px; padding: 0 4px 4px 0; border: 1px solid #b8b8b8; border-radius: 5px; background: #fff; font-size: 20px; }
.quiz-tools .gap { margin-right: 10px; }
.quiz-tools .push { margin-left: auto; }
.quiz-tools .wide { width: 175px; padding-right: 8px; }
.quiz-body { flex: 1; display: flex; min-height: 0; }
.quiz-text { flex: 1; min-width: 0; padding: 20px 12px 0 2px; font-size: 24px; line-height: 52px; white-space: nowrap; overflow: hidden; }
.quiz-text p { margin-bottom: 1px; text-indent: 47px; }
.quiz-text .spread { white-space: normal; text-align: justify; text-align-last: justify; }
.quiz-text q { quotes: none; font-family: "Noto Sans CJK SC", sans-serif; }
.scroll { flex: none; width: 17px; padding-bottom: 4px; display: flex; flex-direction: column; align-items: center; background: #f0f0f0; }
.scroll svg { margin: 20px 0 12px; }
.scroll i { flex: 1; width: 15px; background: #cbcbcb; }
```
